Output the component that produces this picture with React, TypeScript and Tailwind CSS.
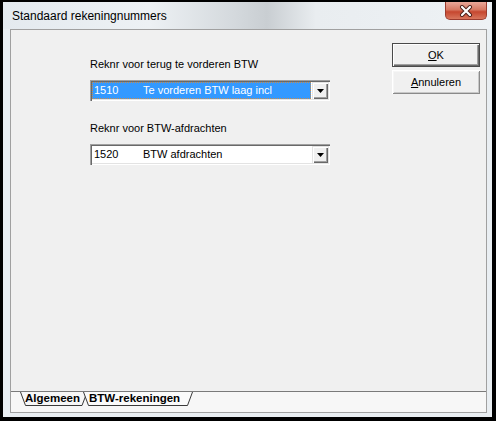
import React from "react";

function Combo({ code, desc, selected }: { code: string; desc: string; selected?: boolean }) {
  return (
    <div className="w-[240px] h-[21px] bg-white flex p-[2px] shadow-[inset_1px_1px_0_#a0a0a0,inset_2px_2px_0_#696969,inset_-1px_-1px_0_#ffffff,inset_-2px_-2px_0_#e3e3e3]">
      <div
        className={
          selected
            ? "flex-1 mr-[1px] flex items-center pl-[1px] bg-[#3399ff] text-white border border-dotted border-[#c98a47]"
            : "flex-1 mr-[1px] flex items-center pl-[1px] text-black border border-transparent"
        }
      >
        <span className="w-[49px]">{code}</span>
        <span>{desc}</span>
      </div>
      <div className="w-[16px] h-[17px] bg-[#f0f0f0] flex items-center justify-center shadow-[inset_1px_1px_0_#e3e3e3,inset_2px_2px_0_#ffffff,inset_-1px_-1px_0_#696969,inset_-2px_-2px_0_#a0a0a0]">
        <svg width="7" height="4" viewBox="0 0 7 4">
          <path d="M0 0 H7 L3.5 4 Z" fill="#000" />
        </svg>
      </div>
    </div>
  );
}

export default function App() {
  return (
    <div className="w-[496px] h-[421px] bg-black pt-[2px] pl-[3px] pr-[4px] pb-[4px] font-['Liberation_Sans',Arial,sans-serif]">
      <div className="w-full h-full bg-[#e9eef2] flex flex-col">
        {/* title bar */}
        <div className="h-[27px] flex items-start bg-[linear-gradient(90deg,#e4eaef_0%,#edf1f4_30%,#d3d8dc_48%,#c9ced2_54%,#e9edf0_64%,#eef2f5_100%)]">
          <span className="pl-[9px] pt-[7px] text-[12px] leading-[14px] text-black">Standaard rekeningnummers</span>
          <div className="ml-auto mr-[5px] w-[42px] h-[18px] rounded-b-[5px] border border-t-0 border-[#9a3b2e] bg-[linear-gradient(#eaa899,#d77963_45%,#c6472f_58%,#d8765d)] flex items-center justify-center">
            <svg width="14" height="12" viewBox="0 0 14 12">
              <path d="M3 2 L11 10 M11 2 L3 10" stroke="#4a1f18" strokeWidth="4" strokeLinecap="round" />
              <path d="M3 2 L11 10 M11 2 L3 10" stroke="#ffffff" strokeWidth="2.2" strokeLinecap="round" />
            </svg>
          </div>
        </div>

        {/* client area */}
        <div className="flex-1 pl-[7px] pr-[5px] pb-[4px] flex">
          <div className="flex-1 border border-[#a0a0a0] bg-[#f0f0f0] flex flex-col text-[11px] leading-[13px]">
            <div className="flex-1 flex">
              <div className="flex-1 pl-[79px] pt-[28px] flex flex-col">
                <span className="text-black">Reknr voor terug te vorderen BTW</span>
                <div className="mt-[9px]">
                  <Combo code="1510" desc="Te vorderen BTW laag incl" selected />
                </div>
                <span className="mt-[21px] text-black">Reknr voor BTW-afdrachten</span>
                <div className="mt-[9px]">
                  <Combo code="1520" desc="BTW afdrachten" />
                </div>
              </div>
              <div className="pt-[13px] pr-[6px] flex flex-col gap-[3px]">
                <button className="w-[88px] h-[24px] border border-[#4a4a4a] bg-[#f0f0f0] shadow-[inset_1px_1px_0_#ffffff,inset_-1px_-1px_0_#696969,inset_-2px_-2px_0_#a0a0a0] text-[11px] text-black">
                  <span className="underline">O</span>K
                </button>
                <button className="w-[88px] h-[24px] bg-[#f0f0f0] shadow-[inset_1px_1px_0_#ffffff,inset_-1px_-1px_0_#8a8a8a,inset_2px_2px_0_#f6f6f6,inset_-2px_-2px_0_#c8c8c8] text-[11px] text-black">
                  <span className="underline">A</span>nnuleren
                </button>
              </div>
            </div>

            {/* sheet tabs */}
            <div className="h-[21px] border-t border-[#7a7a7a] bg-[#f7f7f7] flex items-start pl-[9px] text-[11.5px]">
              <div className="relative w-[67px] h-[14px]">
                <svg className="absolute inset-0" width="67" height="14" viewBox="0 0 67 14">
                  <path d="M0.5 0 L5.5 13.5 L62 13.5 L66 3" stroke="#3a3a3a" strokeWidth="1" fill="none" />
                </svg>
                <span className="relative block pl-[5px] font-bold text-black">Algemeen</span>
              </div>
              <div className="relative w-[110px] h-[14px] -ml-[4px]">
                <svg className="absolute inset-0" width="110" height="14" viewBox="0 0 110 14">
                  <path d="M0.5 0 L5.5 13.5 L104.5 13.5 L109.5 0 Z" fill="#fbfbfb" stroke="none" />
                  <path d="M0.5 0 L5.5 13.5 L104.5 13.5 L109.5 0" stroke="#3a3a3a" strokeWidth="1" fill="none" />
                </svg>
                <span className="relative block pl-[6px] font-bold text-black">BTW-rekeningen</span>
              </div>
            </div>
          </div>
        </div>
      </div>
    </div>
  );
}
